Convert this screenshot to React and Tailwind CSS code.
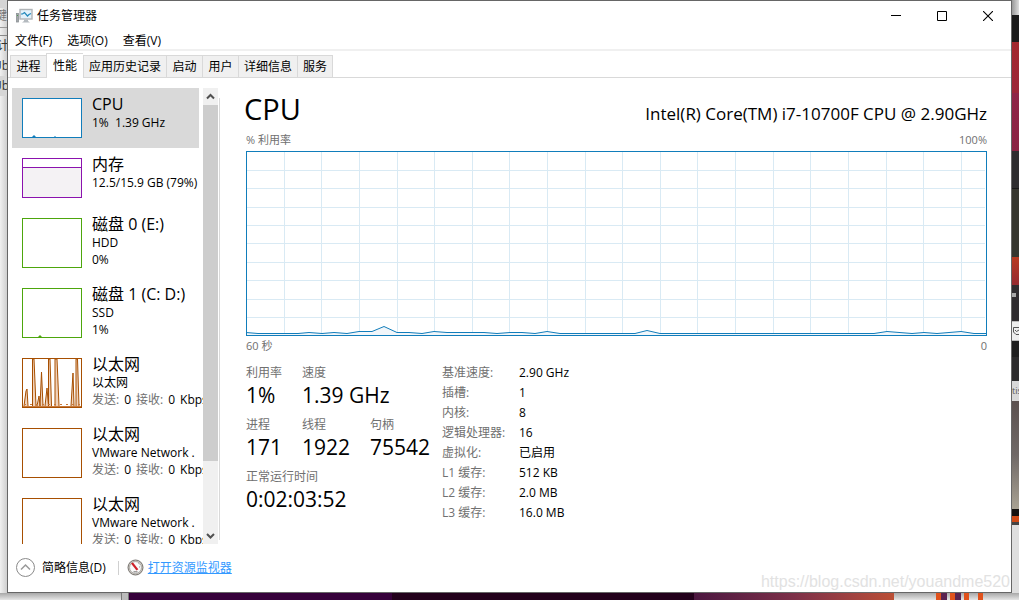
import React from "react";

const GRAPH_VERTICALS = [38, 75, 113, 151, 188, 226, 263, 301, 339, 376, 414, 451, 489, 527, 564, 602, 640, 677, 715];
const GRAPH_HORIZONTALS = [19, 37, 56, 74, 92, 111, 129, 148, 166];
const USAGE =
  "0,181.5 12,182.5 52,182.5 63,181.5 76,182.5 88,181.5 101,182.5 113,180.5 126,180.5 138,175.5 151,181.5 163,181.5 176,182.5 188,180.5 201,181.5 238,181.5 251,182.5 264,181.5 276,181.5 289,182.5 301,180.5 314,182.5 389,182.5 401,179.5 414,182.5 628,182.5 641,180.5 666,182.5 678,181.5 691,182.5 715,180.5 728,182.5 741,182.5";

const TABS = [
  { name: "进程" },
  { name: "性能", selected: true },
  { name: "应用历史记录" },
  { name: "启动" },
  { name: "用户" },
  { name: "详细信息" },
  { name: "服务" },
];

const NetRate = () => (
  <span className="flex gap-[5px]">
    <span className="text-[#707070]">发送:</span>
    <span>0</span>
    <span className="text-[#707070]">接收:</span>
    <span>0</span>
    <span>Kbps</span>
  </span>
);

const DEVICES = [
  { title: "CPU", lines: ["1%  1.39 GHz"], kind: "cpu", selected: true },
  { title: "内存", lines: ["12.5/15.9 GB (79%)"], kind: "memory" },
  { title: "磁盘 0 (E:)", lines: ["HDD", "0%"], kind: "disk" },
  { title: "磁盘 1 (C: D:)", lines: ["SSD", "1%"], kind: "diskActive" },
  { title: "以太网", lines: ["以太网", <NetRate />], kind: "netActive" },
  { title: "以太网", lines: ["VMware Network .", <NetRate />], kind: "net" },
  { title: "以太网", lines: ["VMware Network .", <NetRate />], kind: "net" },
];

const SPECS = [
  ["基准速度:", "2.90 GHz"],
  ["插槽:", "1"],
  ["内核:", "8"],
  ["逻辑处理器:", "16"],
  ["虚拟化:", "已启用"],
  ["L1 缓存:", "512 KB"],
  ["L2 缓存:", "2.0 MB"],
  ["L3 缓存:", "16.0 MB"],
];

const THUMB_BOX = {
  cpu: "h-10 border-[#117dbb]",
  memory: "h-10 border-[#8b12ae]",
  disk: "h-[50px] border-[#4da60c]",
  diskActive: "h-[50px] border-[#4da60c]",
  net: "h-[50px] border-[#a74f01]",
  netActive: "h-[50px] border-[#a74f01]",
};

function Thumb({ kind }) {
  return (
    <span className={`block w-[60px] shrink-0 border bg-white ${THUMB_BOX[kind]}`}>
      {kind === "cpu" && (
        <svg viewBox="0 0 58 38" className="block h-full w-full">
          <path d="M9 38l2-2 2 2zM31 38l1-1 1 1z" fill="#117dbb" />
        </svg>
      )}
      {kind === "memory" && (
        <svg viewBox="0 0 58 38" className="block h-full w-full">
          <rect y="8" width="58" height="30" fill="#f4f2f4" />
          <rect y="8" width="58" height="1" fill="#8b12ae" />
        </svg>
      )}
      {kind === "diskActive" && (
        <svg viewBox="0 0 58 48" className="block h-full w-full">
          <path d="M15 48l2-2 2 2z" fill="#4da60c" />
        </svg>
      )}
      {kind === "netActive" && (
        <svg viewBox="0 0 58 48" className="block h-full w-full">
          <path
            d="M1 47L3 32L4 30L5 47M9.500 47V0H11L13 47M14 47L16 37L17 47L18.500 13L20 47M22 47L24 29L25.500 47V0H27L28.500 47M32 47V0H34L36 47M48 47L50 14L51 47M53 47V0H54.500L56 47"
            fill="#f0d2ba"
            stroke="#a74f01"
            strokeWidth="1"
          />
          <path d="M0 47.500h58" stroke="#c9793a" />
          <path d="M1 45.500h56" stroke="#c9793a" strokeDasharray="2 4" />
        </svg>
      )}
    </span>
  );
}

function Device({ device }) {
  return (
    <button
      type="button"
      className={`flex w-[187px] shrink-0 gap-[10px] pl-[10px] text-left ${
        device.lines.length > 1 ? "h-[70px]" : "h-[60px]"
      } ${device.selected ? "bg-[#d9d9d9]" : ""}`}
    >
      <span className="pt-[10px]">
        <Thumb kind={device.kind} />
      </span>
      <span className="block whitespace-pre pt-1.5">
        <span className="block text-base leading-5">{device.title}</span>
        {device.lines.map((line, i) => (
          <span key={i} className="block text-xs leading-[17px]">
            {line}
          </span>
        ))}
      </span>
    </button>
  );
}

function Chevron({ down }) {
  return (
    <svg viewBox="0 0 15 17" className="block h-[17px] w-[15px]">
      <path d={down ? "M4 7l3.500 3.500L11 7" : "M4 10.500L7.500 7L11 10.500"} fill="none" stroke="#505050" strokeWidth="2" />
    </svg>
  );
}

function AppIcon() {
  return (
    <svg viewBox="0 0 17 16" className="h-4 w-[17px]">
      <rect x=".5" y="5.500" width="2" height="8.500" fill="#a2a6a9" stroke="#8c9296" strokeWidth=".8" />
      <rect x="1" y="7" width="1" height="1" fill="#4f9b4a" />
      <rect x="4" y="1.500" width="12" height="9.500" fill="#e3f2fb" stroke="#b0b4b7" strokeWidth="1.400" />
      <path d="M5 6h1.500L8.500 4.500L11.500 8L13 6.500L15 5.500" fill="none" stroke="#2288bb" strokeWidth="1.200" />
      <path d="M8 11.500h4V13l2 1.500H6L8 13z" fill="#b4babf" />
    </svg>
  );
}

function GaugeIcon() {
  return (
    <svg viewBox="0 0 17 17" className="h-[17px] w-[17px]">
      <circle cx="8.500" cy="8.500" r="7.500" fill="#c9c6c1" stroke="#77736e" />
      <circle cx="8.500" cy="8.500" r="5.900" fill="#fafafa" stroke="#8e8a85" strokeWidth=".6" />
      <path d="M4 4.500L6 3.500L11.300 10.200L9.500 11.500z" fill="#cf2028" />
      <path d="M6.500 12.800h4" stroke="#777" />
      <path d="M11.500 4.500l.8.800M13 8h-1" stroke="#777" strokeWidth=".8" />
    </svg>
  );
}

function Stat({ label, value }) {
  return (
    <div>
      <dt className="text-xs leading-5 text-[#707070]">{label}</dt>
      <dd className="text-[21px] leading-6">{value}</dd>
    </div>
  );
}

function LeftBackdrop() {
  return (
    <div className="flex w-[7px] shrink-0 flex-col overflow-hidden bg-gradient-to-r from-[#f0f0f0] to-[#cfcfcf] text-xs text-[#333]">
      <div className="h-2 bg-[#d5d5d5]" />
      <div className="flex h-5 justify-end border-b border-[#999] leading-4 text-[#777]">
        <span>键</span>
      </div>
      <div className="h-2 border-b border-[#888]" />
      <div className="flex h-5 justify-end leading-5">
        <span className="-mr-0.5">计</span>
      </div>
      <div className="flex h-5 justify-end leading-5">
        <span className="-mr-0.5">Ub</span>
      </div>
      <div className="flex h-5 justify-end bg-[#d6d6d6] leading-5">
        <span className="-mr-0.5">Ub</span>
      </div>
    </div>
  );
}

function RightBackdrop() {
  return (
    <div className="flex w-[7px] shrink-0 flex-col overflow-hidden bg-[#dedede]">
      <div className="h-[15px] bg-gradient-to-r from-[#999] to-[#ddd]" />
      <div className="h-[27px] bg-[#1a1a1a]" />
      <div className="h-[51px] bg-gradient-to-b from-[#a3282d] to-[#9c2739]" />
      <div className="h-[58px] bg-gradient-to-b from-[#8f2648] to-[#8a2343]" />
      <div className="h-[38px] border-b border-[#171717] bg-[#2e2d2f]" />
      <div className="h-[68px] bg-[#36362f]" />
      <div className="h-[28px] bg-gradient-to-b from-[#b83a20] to-[#952a30]" />
      <div className="flex h-[36px] items-center bg-[#2f2c2f]">
        <span className="-mt-4 h-1 w-1 bg-[#a8a8a8]" />
      </div>
      <div className="flex h-5 items-center border-y border-[#bbb] bg-[#eee]">
        <svg viewBox="0 0 7 8" className="h-2 w-[7px]">
          <path d="M7 .5H1.500V5L4 7.500h3M3 3l1.500 1.500L7 3" fill="none" stroke="#555" />
        </svg>
      </div>
      <div className="h-4 bg-[#1f1f1f]" />
      <div className="h-6 bg-[#2c2b2c]" />
      <div className="h-5 bg-[#d8d8d8] text-[9px] leading-5 text-[#555]">tis</div>
      <div className="h-[108px] bg-gradient-to-b from-[#5b514f] via-[#706967] to-[#a9a293]" />
      <div className="h-[7px] bg-[#14100e]" />
      <div className="h-1.5 bg-[#cf4a16]" />
      <div className="h-[3px] bg-[#444]" />
    </div>
  );
}

function BottomBackdrop() {
  return (
    <div className="flex h-[7px] shrink-0 bg-gradient-to-b from-[#a8a8a8] to-[#e6e6e6]">
      <div className="w-[121px]" />
      <div className="w-2 border-x border-[#777] bg-[#bbb]" />
      <div className="w-[263px] bg-[#36003a]" />
      <div className="w-[302px] bg-[#23001b]" />
      <div className="w-[200px] bg-gradient-to-r from-[#4c1740] via-[#7d3048] to-[#bb4f35]" />
      <div className="flex gap-[3px] pl-[42px]">
        <span className="w-[11px] bg-gradient-to-r from-[#e0521c] from-45% to-[#5a2350] to-50%" />
        <span className="w-[11px] bg-gradient-to-r from-[#e0521c] from-45% to-[#5a2350] to-50%" />
        <span className="w-[5px] bg-[#e0521c]" />
        <span className="ml-1.5 w-[5px] bg-[#e0521c]" />
      </div>
    </div>
  );
}

export default function App() {
  return (
    <div className="flex h-screen flex-col overflow-hidden bg-[#ddd] font-['Open_Sans','Noto_Sans_CJK_SC',sans-serif] text-xs text-black">
      <div className="flex min-h-0 flex-1">
        <LeftBackdrop />
        <div className="relative flex min-w-0 flex-1 flex-col border border-[#666] bg-white">
          <header className="flex h-[30px] shrink-0 items-center pl-2">
            <AppIcon />
            <h1 className="flex-1 pl-1 text-xs">任务管理器</h1>
            <button type="button" aria-label="最小化" className="flex h-full w-[46px] items-center justify-center">
              <svg viewBox="0 0 10 10" className="h-[10px] w-[10px]">
                <path d="M0 4.500h10" stroke="#000" />
              </svg>
            </button>
            <button type="button" aria-label="最大化" className="flex h-full w-[46px] items-center justify-center">
              <svg viewBox="0 0 10 10" className="h-[10px] w-[10px]">
                <path d="M.5.5h9v9h-9z" fill="none" stroke="#000" />
              </svg>
            </button>
            <button type="button" aria-label="关闭" className="flex h-full w-[46px] items-center justify-center">
              <svg viewBox="0 0 10 10" className="h-[10px] w-[10px]">
                <path d="M0 0l10 10M10 0L0 10" stroke="#000" strokeWidth="1.100" />
              </svg>
            </button>
          </header>

          <nav className="flex h-5 shrink-0 gap-[15px] border-b-2 border-[#f0f0f0] pl-[7px] leading-5">
            <button type="button">文件(F)</button>
            <button type="button">选项(O)</button>
            <button type="button">查看(V)</button>
          </nav>

          <div role="tablist" className="flex h-[27px] shrink-0 items-end border-b border-[#d9d9d9] pl-0.5">
            {TABS.map((tab) => (
              <button
                key={tab.name}
                type="button"
                role="tab"
                aria-selected={!!tab.selected}
                className={`min-w-9 border-l border-t border-[#d9d9d9] last:border-r ${
                  tab.selected ? "-mb-px h-[25px] bg-white px-1.5 leading-6" : "h-[22px] bg-[#f0f0f0] px-[5px] leading-[22px]"
                }`}
              >
                {tab.name}
              </button>
            ))}
          </div>

          <div className="flex min-h-0 flex-1 pl-1 pt-[10px]">
            <aside className="flex shrink-0">
              <div className="flex w-[191px] flex-col overflow-hidden">
                {DEVICES.map((device, i) => (
                  <Device key={i} device={device} />
                ))}
              </div>
              <div className="flex w-[15px] flex-col bg-[#f0f0f0]">
                <Chevron />
                <div className="min-h-0 flex-[356] bg-[#cdcdcd]" />
                <div className="min-h-0 flex-[66]" />
                <Chevron down />
              </div>
              <div className="mb-1 ml-px mt-[10px] w-px bg-[#d9d9d9]" />
            </aside>

            <main className="min-w-0 flex-1 overflow-hidden pl-[26px] pr-6">
              <div className="flex h-11 items-baseline justify-between">
                <h2 className="-ml-0.5 text-[29px] leading-[42px]">CPU</h2>
                <p className="text-[17px]">Intel(R) Core(TM) i7-10700F CPU @ 2.90GHz</p>
              </div>
              <div className="flex h-[19px] justify-between text-[11px] leading-4 text-[#707070]">
                <span>% 利用率</span>
                <span>100%</span>
              </div>
              <svg viewBox="0 0 741 185" preserveAspectRatio="none" className="block h-[185px] w-full">
                <g fill="#d9eaf4">
                  {GRAPH_VERTICALS.map((x) => (
                    <rect key={x} x={x} y="1" width="1" height="183" />
                  ))}
                  {GRAPH_HORIZONTALS.map((y) => (
                    <rect key={y} x="1" y={y} width="738" height="1" />
                  ))}
                </g>
                <polygon points={`0,185 ${USAGE} 741,185`} fill="#f1f6fa" />
                <polyline points={USAGE} fill="none" stroke="#117dbb" />
                <rect x=".5" y=".5" width="740" height="184" fill="none" stroke="#117dbb" />
              </svg>
              <div className="flex h-[27px] justify-between pt-0.5 text-[11px] leading-4 text-[#707070]">
                <span>60 秒</span>
                <span>0</span>
              </div>

              <div className="flex">
                <dl className="grid w-[196px] shrink-0 grid-cols-[56px_68px_auto] content-start gap-y-2">
                  <Stat label="利用率" value="1%" />
                  <div className="col-span-2">
                    <Stat label="速度" value="1.39 GHz" />
                  </div>
                  <Stat label="进程" value="171" />
                  <Stat label="线程" value="1922" />
                  <Stat label="句柄" value="75542" />
                  <div className="col-span-3">
                    <Stat label="正常运行时间" value="0:02:03:52" />
                  </div>
                </dl>
                <dl className="grid grid-cols-[77px_auto] leading-5">
                  {SPECS.map(([label, value]) => (
                    <React.Fragment key={label}>
                      <dt className="text-[#707070]">{label}</dt>
                      <dd>{value}</dd>
                    </React.Fragment>
                  ))}
                </dl>
              </div>
            </main>
          </div>

          <footer className="flex h-12 shrink-0 items-center pb-px pl-2">
            <button type="button" className="flex items-center gap-[7px]">
              <svg viewBox="0 0 19 19" className="h-[19px] w-[19px]">
                <circle cx="9.500" cy="9.500" r="9" fill="none" stroke="#8a8a8a" />
                <path d="M5 11.500l4.500-4.500l4.500 4.500" fill="none" stroke="#9a9a9a" strokeWidth="1.500" />
              </svg>
              简略信息(D)
            </button>
            <span className="ml-3 h-[14px] w-px bg-[#d0d0d0]" />
            <a href="#resource-monitor" className="ml-2 flex items-center gap-1 text-[#3399ff]">
              <GaugeIcon />
              <span className="underline">打开资源监视器</span>
            </a>
          </footer>

          <span className="pointer-events-none absolute bottom-0 right-px font-['Liberation_Sans',sans-serif] text-base leading-5 text-[#e2e2e2]">
            https://blog.csdn.net/youandme520
          </span>
        </div>
        <RightBackdrop />
      </div>
      <BottomBackdrop />
    </div>
  );
}
